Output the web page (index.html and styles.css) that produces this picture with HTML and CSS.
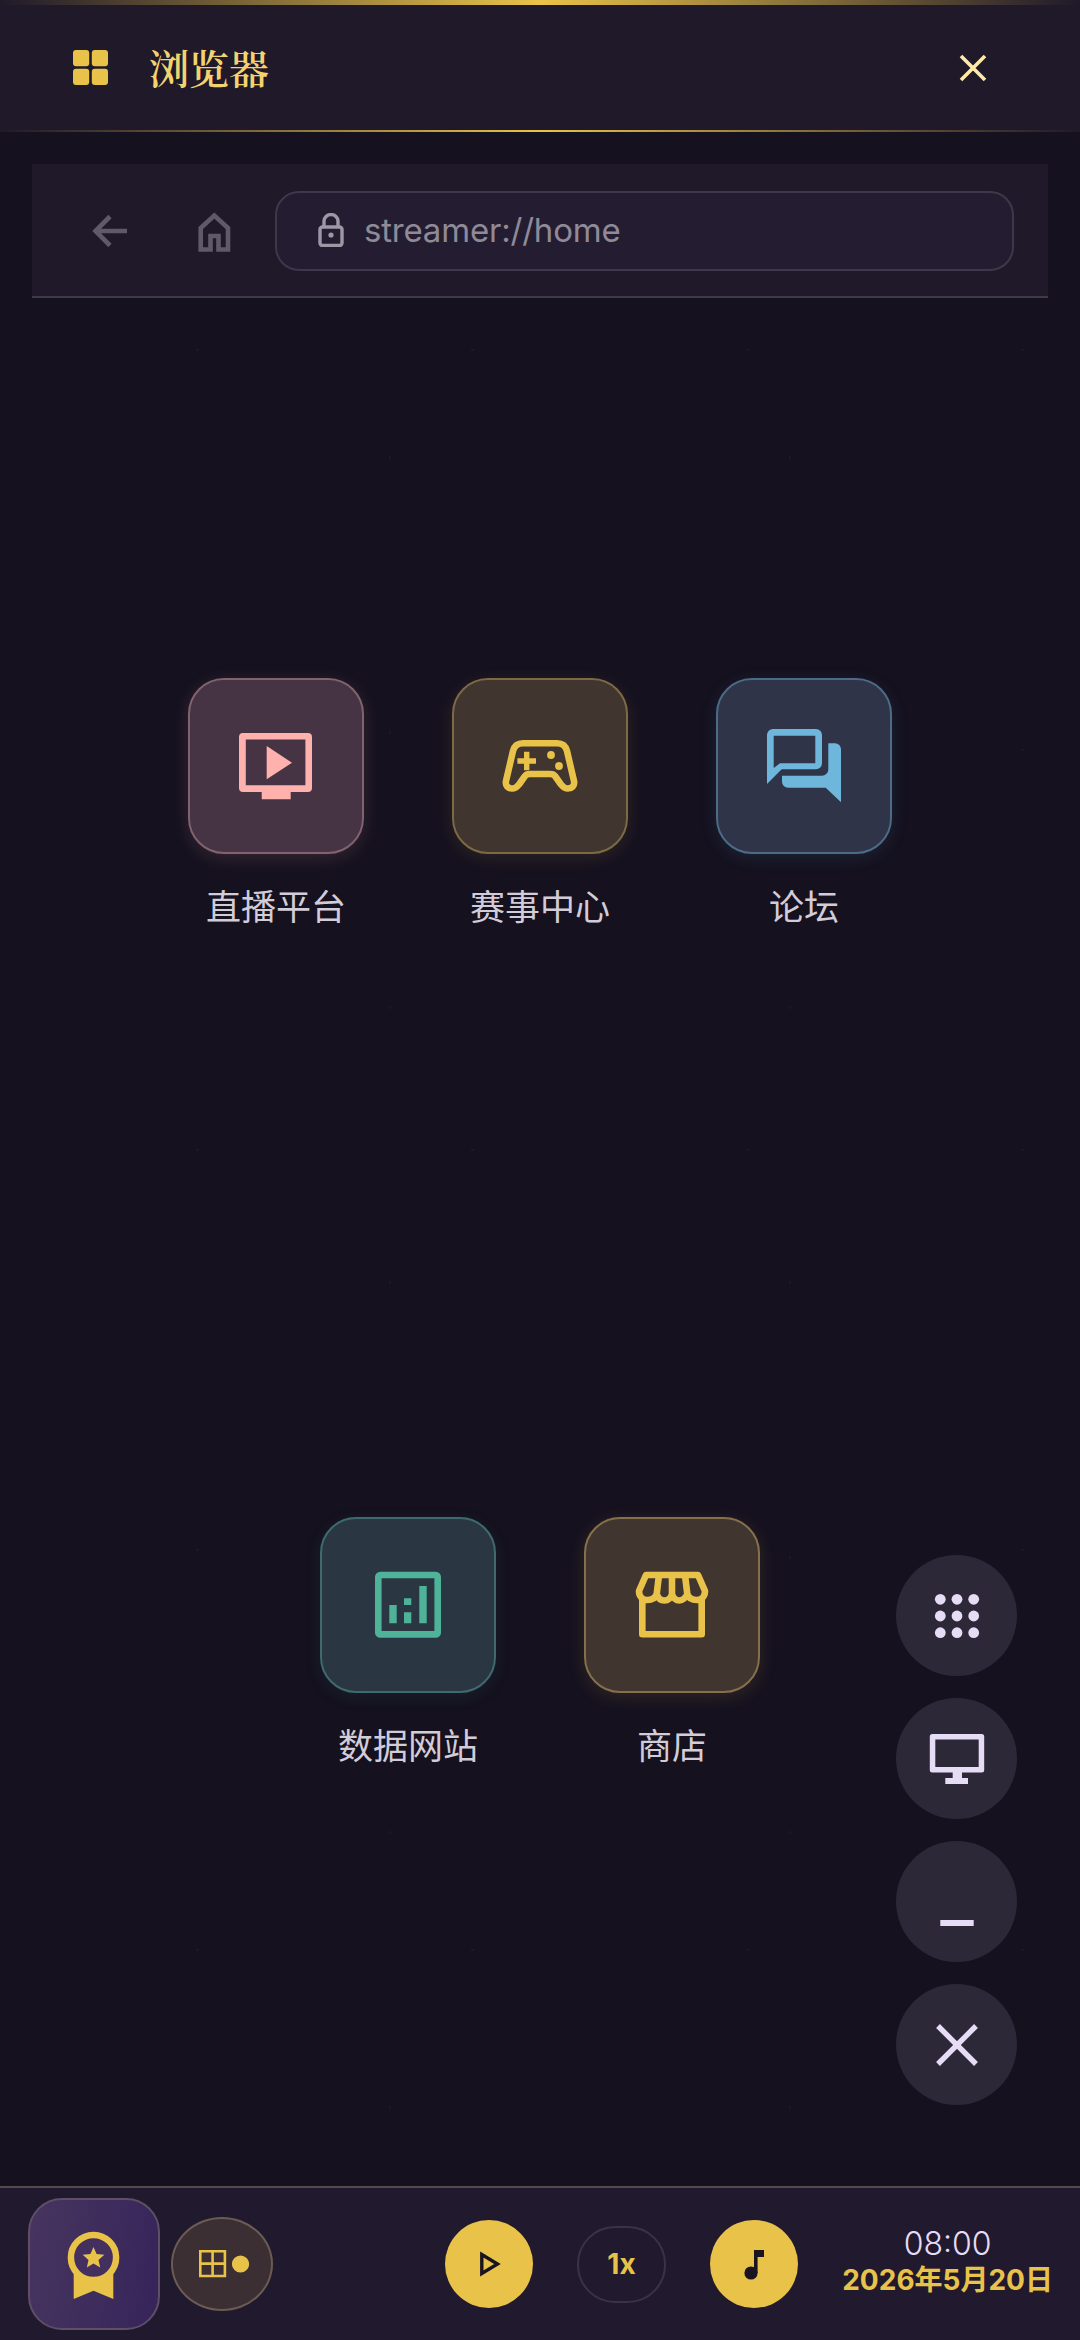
FILE: index.html
```html
<!DOCTYPE html>
<html lang="zh-CN">
<head>
  <meta charset="UTF-8">
  <meta name="viewport" content="width=device-width, initial-scale=1.0">
  <title>浏览器</title>
  <link rel="stylesheet" href="styles.css">
</head>
<body>
  <div class="screen">
    <header class="title-bar">
      <div class="title-left">
        <svg class="title-icon" viewBox="0 0 35 35"><rect width="16.2" height="16.2" rx="3"/><rect x="18.8" width="16.2" height="16.2" rx="3"/><rect y="18.8" width="16.2" height="16.2" rx="3"/><rect x="18.8" y="18.8" width="16.2" height="16.2" rx="3"/></svg>
        <h1 class="title-text">浏览器</h1>
      </div>
      <svg class="title-close" viewBox="0 0 28 28"><path d="M2 2 L26 26 M26 2 L2 26"/></svg>
    </header>

    <nav class="nav-bar">
      <svg class="nav-icon nav-back" viewBox="0 0 48 48"><path d="M41 25 H10 M24 10.5 L9.5 25 L24 39.5"/></svg>
      <svg class="nav-icon" viewBox="0 0 48 48"><path d="M10.7 43.5 V22 L24.3 9.6 L38 22 V43.5 H28.5 V30 H20.5 V43.5 Z"/></svg>
      <div class="url-box">
        <svg class="url-lock" viewBox="0 0 26 34"><path d="M6 14 V8 a7 6.5 0 0 1 14 0 V14"/><rect x="2" y="14" width="22" height="18.5" rx="2.5"/><circle class="url-lock-dot" cx="13" cy="22" r="2.6"/></svg>
        <span class="url-text">streamer://home</span>
      </div>
    </nav>

    <main class="apps">
      <div class="apps-row">
        <div class="app">
          <div class="app-tile tile-pink">
            <svg viewBox="0 0 80 80"><path fill-rule="evenodd" d="M7 7 H72 a4 4 0 0 1 4 4 V62 a4 4 0 0 1 -4 4 H54.7 V73.3 H25.7 V66 H7 a4 4 0 0 1 -4 -4 V11 a4 4 0 0 1 4 -4 Z M9.8 13.6 V59.3 H69.4 V13.6 Z"/><path d="M30.7 20 L56 36.7 L30.7 53.3 Z"/></svg>
          </div>
          <div class="app-label">直播平台</div>
        </div>
        <div class="app">
          <div class="app-tile tile-gold">
            <svg viewBox="0 0 80 80"><path class="line" d="M23 17.3 H57 C63 17.3 66 21 67 25 L74 55 C75 60 71.5 62.5 68 62.5 C65 62.5 63 61 61 58.5 L55 50 C54 48.5 52 48 50 48 H30 C28 48 26 48.5 25 50 L19 58.5 C17 61 15 62.5 12 62.5 C8.5 62.5 5 60 6 55 L13 25 C14 21 17 17.3 23 17.3 Z"/><path d="M24 25.7 H29.4 V32.3 H36 V37.7 H29.4 V44.3 H24 V37.7 H17.4 V32.3 H24 Z"/><circle cx="51" cy="29" r="3.9"/><circle cx="59" cy="40" r="3.9"/></svg>
          </div>
          <div class="app-label">赛事中心</div>
        </div>
        <div class="app">
          <div class="app-tile tile-blue">
            <svg viewBox="0 0 80 80"><path fill-rule="evenodd" d="M3 58 V9 a6 6 0 0 1 6 -6 H52 a6 6 0 0 1 6 6 V37.3 a6 6 0 0 1 -6 6 H17.7 Z M9.7 42 L16 37.3 H51.3 V9.7 H9.7 Z"/><path d="M64.3 17.3 H71 a6 6 0 0 1 6 6 V76.3 L61.7 61.7 H24 a6 6 0 0 1 -6 -6 V49.7 H58 a6.3 6.3 0 0 0 6.3 -6.3 Z"/></svg>
          </div>
          <div class="app-label">论坛</div>
        </div>
      </div>
      <div class="apps-row">
        <div class="app">
          <div class="app-tile tile-teal">
            <svg viewBox="0 0 80 80"><rect class="line" x="10.3" y="10" width="59.4" height="59.4" rx="2"/><path d="M21.3 40 H28.7 V58.3 H21.3 Z M36 33.3 H43.3 V40 H36 Z M36 47.3 H43.3 V58.3 H36 Z M51.3 21 H58.7 V58.3 H51.3 Z"/></svg>
          </div>
          <div class="app-label">数据网站</div>
        </div>
        <div class="app">
          <div class="app-tile tile-amber">
            <svg viewBox="0 0 80 80"><path class="line" d="M14 10 H66 L73 26 C73 32 69 35 65 35 C60 35 56.5 33 55.3 29 C54 33 50 35.5 47.6 35.5 C44 35.5 41 33 40 29 C39 33 36 35.5 32.4 35.5 C29 35.5 26 33 24.7 29 C23.5 33 20 35 15 35 C11 35 7 32 7 26 Z M27 10 L24.7 29 M40 10 V29 M53 10 L55.3 29 M10.3 35 V69.3 H69.7 V35"/></svg>
          </div>
          <div class="app-label">商店</div>
        </div>
      </div>
    </main>

    <div class="fab-stack">
      <button class="fab">
        <svg viewBox="0 0 64 64"><circle cx="15.3" cy="15.3" r="5.4"/><circle cx="32" cy="15.3" r="5.4"/><circle cx="48.7" cy="15.3" r="5.4"/><circle cx="15.3" cy="32" r="5.4"/><circle cx="32" cy="32" r="5.4"/><circle cx="48.7" cy="32" r="5.4"/><circle cx="15.3" cy="48.7" r="5.4"/><circle cx="32" cy="48.7" r="5.4"/><circle cx="48.7" cy="48.7" r="5.4"/></svg>
      </button>
      <button class="fab">
        <svg viewBox="0 0 64 64"><path fill-rule="evenodd" d="M7.3 7 H56.7 a2.5 2.5 0 0 1 2.5 2.5 V43 a2.5 2.5 0 0 1 -2.5 2.5 H37 V51 H43 V57 H20.3 V51 H27.7 V45.5 H7.3 a2.5 2.5 0 0 1 -2.5 -2.5 V9.5 a2.5 2.5 0 0 1 2.5 -2.5 Z M10.3 12.5 V40 H53.7 V12.5 Z"/></svg>
      </button>
      <button class="fab">
        <svg viewBox="0 0 64 64"><rect x="15.3" y="50" width="33.4" height="6"/></svg>
      </button>
      <button class="fab">
        <svg viewBox="0 0 64 64"><path class="line" d="M13 13 L51 51 M51 13 L13 51"/></svg>
      </button>
    </div>

    <footer class="bottom-bar">
      <div class="badge">
        <svg viewBox="0 0 80 80"><path d="M19.7 48 V75 L39.5 66.7 L59.3 75 V48 Z"/><circle class="badge-ring" cx="39.5" cy="33.5" r="22.6"/><path d="M39.5 23 L42.6 30.1 L50.3 30.8 L44.5 35.9 L46.2 43.4 L39.5 39.5 L32.8 43.4 L34.5 35.9 L28.7 30.8 L36.4 30.1 Z"/></svg>
      </div>
      <div class="layout-chip">
        <svg viewBox="0 0 50 28"><path class="line" d="M1.3 1.3 H25.9 V26 H1.3 Z M13.6 1.3 V26 M1.3 13.6 H25.9"/><circle cx="41.5" cy="14" r="8.6"/></svg>
      </div>
      <button class="round-btn play-btn">
        <svg viewBox="0 0 28 28"><path d="M6.8 4.5 L22.5 14 L6.8 23.5 Z"/></svg>
      </button>
      <div class="speed-pill">1x</div>
      <button class="round-btn music-btn">
        <svg viewBox="0 0 28 32"><circle cx="11" cy="25" r="6.6"/><path d="M14 2 H24 V9 H17.6 V25 H14 Z"/></svg>
      </button>
      <div class="clock">
        <div class="clock-time">08:00</div>
        <div class="clock-date">2026年5月20日</div>
      </div>
    </footer>
  </div>
</body>
</html>
```

FILE: styles.css
```css
:root {
  --gold: #e9c349;
  --page-bg: #15111f;
  --panel-bg: #1f1929;
  --fab-bg: #2d2838;
  --fab-ink: #e6dcf6;
}

* {
  box-sizing: border-box;
}

body {
  margin: 0;
  background: var(--page-bg);
  font-family: Inter, "Noto Sans CJK SC", sans-serif;
}

button {
  border: 0;
  padding: 0;
  background: none;
}

svg {
  display: block;
}

.screen {
  position: relative;
  display: flex;
  flex-direction: column;
  width: 1080px;
  height: 2340px;
  overflow: hidden;
  background-color: var(--page-bg);
  background-image:
    radial-gradient(circle, rgba(255, 255, 255, 0.035) 1px, transparent 1.6px),
    radial-gradient(circle, rgba(255, 255, 255, 0.03) 1px, transparent 1.6px);
  background-size: 275px 400px, 400px 275px;
  background-position: 60px 150px, 190px 320px;
}

/* title bar */
.title-bar {
  position: relative;
  display: flex;
  align-items: center;
  justify-content: space-between;
  height: 132px;
  padding: 3px 93px 0 73px;
  background: var(--panel-bg);
}

.title-bar::before,
.title-bar::after {
  content: '';
  position: absolute;
  left: 0;
  right: 0;
  background: linear-gradient(90deg, transparent, var(--gold) 50%, transparent);
}

.title-bar::before {
  top: 0;
  height: 5px;
}

.title-bar::after {
  bottom: 0;
  height: 2px;
}

.title-left {
  display: flex;
  align-items: center;
  gap: 41px;
}

.title-icon {
  width: 35px;
  height: 35px;
  fill: var(--gold);
}

.title-text {
  margin: 0 0 2px;
  font-family: "Noto Serif CJK SC", "Noto Sans CJK SC", serif;
  font-size: 40px;
  font-weight: 600;
  line-height: 48px;
  color: #f3d36f;
}

.title-close {
  width: 28px;
  height: 28px;
  fill: none;
  stroke: #ffe9a8;
  stroke-width: 3.6;
}

/* browser nav */
.nav-bar {
  display: flex;
  align-items: center;
  gap: 37px;
  height: 134px;
  margin: 32px 32px 0;
  padding: 0 34px 0 54px;
  background: var(--panel-bg);
  border-bottom: 2px solid #3f3a49;
}

.nav-icon {
  width: 48px;
  height: 48px;
  flex: none;
  fill: none;
  stroke: #5f5a6a;
  stroke-width: 4.6;
}

.nav-back {
  margin-right: 19px;
}

.url-box {
  display: flex;
  align-items: center;
  flex: 1;
  gap: 20px;
  height: 80px;
  margin-top: 2px;
  padding: 0 0 2px 41px;
  background: #241d31;
  border: 2px solid #3e384a;
  border-radius: 24px;
}

.url-lock {
  width: 26px;
  height: 34px;
  fill: none;
  stroke: #9d97a6;
  stroke-width: 3.4;
}

.url-lock-dot {
  fill: #9d97a6;
  stroke: none;
}

.url-text {
  font-size: 33px;
  letter-spacing: -0.2px;
  color: #8f8a98;
}

/* app grid */
.apps {
  display: flex;
  flex-direction: column;
  gap: 587px;
  padding-top: 380px;
}

.apps-row {
  display: flex;
  justify-content: center;
  gap: 88px;
}

.app {
  width: 176px;
  text-align: center;
}

.app-tile {
  display: flex;
  align-items: center;
  justify-content: center;
  width: 176px;
  height: 176px;
  border: 2px solid;
  border-radius: 36px;
}

.app-tile svg {
  width: 80px;
  height: 80px;
  fill: currentColor;
}

.app-tile .line {
  fill: none;
  stroke: currentColor;
  stroke-width: 6.6;
  stroke-linejoin: round;
}

.app-label {
  margin-top: 26px;
  font-family: "Noto Sans CJK SC", sans-serif;
  font-size: 35px;
  line-height: 50px;
  color: #d2ccd9;
  white-space: nowrap;
}

.tile-pink {
  color: #ffb1ad;
  background: #463343;
  border-color: #80636e;
  box-shadow: 0 4px 18px rgba(255, 177, 173, 0.14);
}

.tile-gold {
  color: var(--gold);
  background: #40352f;
  border-color: #7d6a45;
  box-shadow: 0 4px 18px rgba(233, 195, 73, 0.11);
}

.tile-blue {
  color: #6fb6dc;
  background: #2f3449;
  border-color: #4b6b87;
  box-shadow: 0 4px 18px rgba(111, 182, 220, 0.11);
}

.tile-teal {
  color: #4eb398;
  background: #2a3642;
  border-color: #3f6a6f;
  box-shadow: 0 4px 18px rgba(78, 179, 152, 0.09);
}

.tile-amber {
  color: var(--gold);
  background: #41352f;
  border-color: #85704b;
  box-shadow: 0 4px 18px rgba(233, 195, 73, 0.13);
}

/* floating buttons */
.fab-stack {
  position: absolute;
  top: 1555px;
  right: 63px;
  display: flex;
  flex-direction: column;
  gap: 22px;
}

.fab {
  display: flex;
  align-items: center;
  justify-content: center;
  width: 121px;
  height: 121px;
  border-radius: 50%;
  background: var(--fab-bg);
}

.fab svg {
  width: 64px;
  height: 64px;
  fill: var(--fab-ink);
}

.fab .line {
  fill: none;
  stroke: var(--fab-ink);
  stroke-width: 5.4;
}

/* bottom bar */
.bottom-bar {
  position: absolute;
  left: 0;
  right: 0;
  bottom: 0;
  display: flex;
  align-items: center;
  height: 154px;
  padding: 0 27px 0 28px;
  background: #211a2e;
  border-top: 2px solid #57494f;
}

.badge {
  display: flex;
  align-items: center;
  justify-content: center;
  width: 132px;
  height: 132px;
  background: linear-gradient(100deg, #47345f, #3d2c5c 55%, #36245a);
  border: 2px solid #5e4e68;
  border-radius: 34px;
}

.badge svg {
  width: 80px;
  height: 80px;
  fill: var(--gold);
}

.badge-ring {
  fill: #43305f;
  stroke: var(--gold);
  stroke-width: 6.5;
}

.layout-chip {
  display: flex;
  align-items: center;
  justify-content: center;
  width: 102px;
  height: 94px;
  margin-left: 11px;
  padding-left: 4px;
  background: #3b2f33;
  border: 2px solid #6a5c53;
  border-radius: 50%;
}

.layout-chip svg {
  width: 50px;
  height: 28px;
  fill: var(--gold);
}

.layout-chip .line {
  fill: none;
  stroke: var(--gold);
  stroke-width: 2.6;
}

.round-btn {
  display: flex;
  align-items: center;
  justify-content: center;
  width: 88px;
  height: 88px;
  border-radius: 50%;
  background: var(--gold);
}

.play-btn {
  margin-left: 172px;
}

.play-btn svg {
  width: 28px;
  height: 28px;
  fill: none;
  stroke: #1a1420;
  stroke-width: 3.4;
}

.speed-pill {
  width: 89px;
  height: 77px;
  margin: 0 44px;
  border: 2px solid #3a3346;
  border-radius: 38px;
  font-size: 28px;
  font-weight: 700;
  line-height: 73px;
  text-align: center;
  color: var(--gold);
}

.music-btn svg {
  width: 28px;
  height: 32px;
  fill: #1a1420;
}

.clock {
  margin-left: auto;
  margin-bottom: 5px;
  text-align: center;
}

.clock-time {
  font-size: 32px;
  font-weight: 300;
  line-height: 36px;
  color: #e6dcf6;
}

.clock-date {
  font-size: 28px;
  font-weight: 700;
  line-height: 36px;
  color: var(--gold);
  white-space: nowrap;
}
```
